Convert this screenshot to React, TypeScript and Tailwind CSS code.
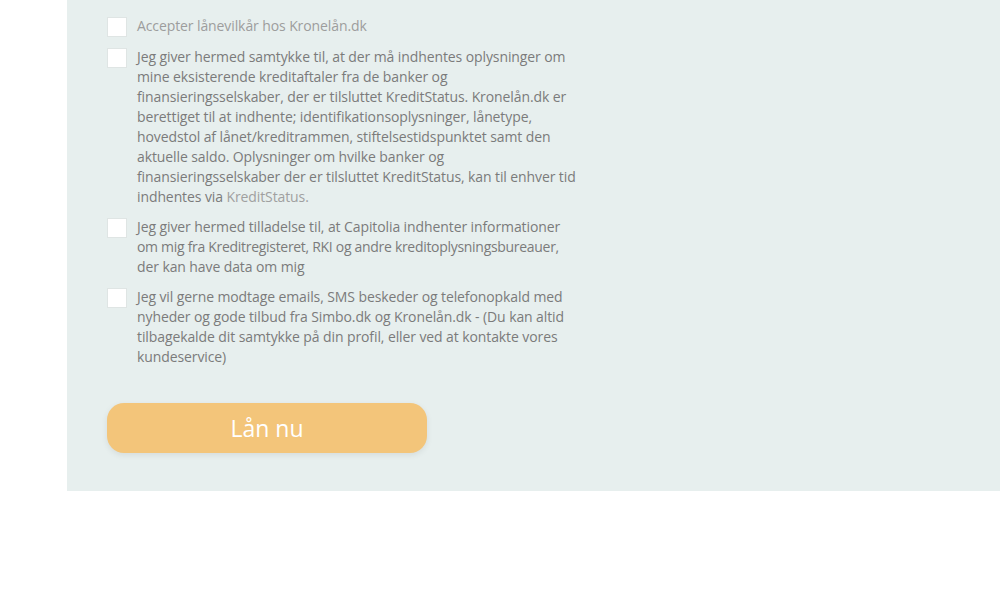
export default function App() {
  const rows: { key: string; content: React.ReactNode; light?: boolean }[] = [
    { key: "a", content: "Accepter lånevilkår hos Kronelån.dk", light: true },
    {
      key: "b",
      content: (
        <>
          Jeg giver hermed samtykke til, at der må indhentes oplysninger om mine eksisterende kreditaftaler fra de banker og finansieringsselskaber, der er tilsluttet KreditStatus. Kronelån.dk er berettiget til at indhente; identifikationsoplysninger, lånetype, hovedstol af lånet/kreditrammen, stiftelsestidspunktet samt den aktuelle saldo. Oplysninger om hvilke banker og finansieringsselskaber der er tilsluttet KreditStatus, kan til enhver tid indhentes via{" "}
          <span className="text-[#a0a0a0]">KreditStatus.</span>
        </>
      ),
    },
    {
      key: "c",
      content: (
        <>
          Jeg giver hermed tilladelse til, at Capitolia indhenter informationer
          <br />
          <span className="whitespace-nowrap tracking-[-0.3px]">om mig fra Kreditregisteret, RKI og andre kreditoplysningsbureauer,</span>
          <br />
          der kan have data om mig
        </>
      ),
    },
    {
      key: "d",
      content:
        "Jeg vil gerne modtage emails, SMS beskeder og telefonopkald med nyheder og gode tilbud fra Simbo.dk og Kronelån.dk - (Du kan altid tilbagekalde dit samtykke på din profil, eller ved at kontakte vores kundeservice)",
    },
  ];
  return (
    <div className="w-[1000px] h-[600px] bg-white flex" style={{ fontFamily: '"Open Sans", sans-serif' }}>
      <div className="ml-[67px] flex-1 h-[491px] bg-[#e7efee] pl-[40px] pt-[16px]">
        <div className="flex flex-col gap-[10px] w-[490px]">
          {rows.map((r) => (
            <label key={r.key} className="flex gap-[10px] items-start">
              <span className="mt-[1px] w-[20px] h-[20px] shrink-0 bg-white border border-[#dfe5e4]" />
              <span
                className={`text-[14px] leading-[20px] tracking-[-0.1px] w-[440px] ${r.light ? "text-[#9d9d9d]" : "text-[#7b7b7b]"}`}
              >
                {r.content}
              </span>
            </label>
          ))}
        </div>
        <button className="mt-[36px] w-[320px] h-[50px] rounded-[17px] bg-[#f3c57a] text-white text-[23px] shadow-[0_2px_6px_rgba(0,0,0,0.08)]">
          Lån nu
        </button>
      </div>
    </div>
  );
}
